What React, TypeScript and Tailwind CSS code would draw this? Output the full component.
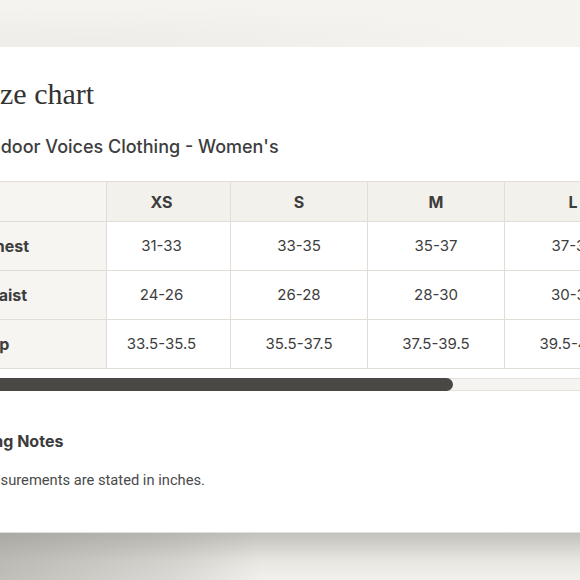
import React from 'react';

const sizes = ['XS', 'S', 'M', 'L'];

const rows = [
  { label: 'Chest', values: ['31-33', '33-35', '35-37', '37-39'] },
  { label: 'Waist', values: ['24-26', '26-28', '28-30', '30-32'] },
  { label: 'Hip', values: ['33.5-35.5', '35.5-37.5', '37.5-39.5', '39.5-41.5'] },
];

const sans = { fontFamily: 'Inter, "Noto Sans", sans-serif' };

const App: React.FC = () => {
  return (
    <div className="w-[580px] h-[580px] overflow-hidden flex flex-col bg-[#f4f3f0]" style={sans}>
      {/* blurred page behind the modal */}
      <div className="h-[47px] shrink-0 bg-[radial-gradient(ellipse_at_90px_40px,#efede9,#f4f3f0_60%)]"></div>

      <div className="h-[486px] shrink-0 bg-white border-b border-[#e2e0dc] overflow-hidden">
        <div className="-ml-[25px] w-[720px] pt-[29px] text-[#3b3b3b]">
          <h2 className="text-[30px] leading-[36px] text-[#333333]" style={{ fontFamily: '"Liberation Serif", "DejaVu Serif", serif' }}>
            Size chart
          </h2>

          <h3 className="mt-[23px] ml-[10px] text-[18px] leading-[24px] font-medium text-[#3d3d3d]">
            Indoor Voices Clothing - Women's
          </h3>

          <table className="mt-[22px] border-collapse text-[15px] text-[#3d3d3d]">
            <thead>
              <tr className="h-[40px] bg-[#f3f1ec]">
                <th className="w-[131px] border border-[#e2ded7] bg-[#f6f5f2]"></th>
                {sizes.map((s, i) => (
                  <th
                    key={s}
                    className={`border border-[#e2ded7] text-[16px] font-bold text-center ${i === 0 ? 'w-[124px] pr-[14px]' : 'w-[137px]'}`}
                  >
                    {s}
                  </th>
                ))}
              </tr>
            </thead>
            <tbody>
              {rows.map((r) => (
                <tr key={r.label} className="h-[49px]">
                  <td className="border border-[#e2ded7] bg-[#f6f5f2] pl-[7px] text-[16px] font-bold text-left">{r.label}</td>
                  {r.values.map((v, i) => (
                    <td key={v} className={`border border-[#e2ded7] text-center ${i === 0 ? 'pr-[14px]' : ''}`}>
                      {v}
                    </td>
                  ))}
                </tr>
              ))}
            </tbody>
          </table>

          {/* horizontal scrollbar */}
          <div className="mt-[9px] h-[13px] w-[720px] bg-[#f5f4f1] border-y border-[#e4e1dc] flex">
            <div className="w-[478px] h-[13px] -mt-px bg-[#4a4844] rounded-r-full"></div>
          </div>

          <h4 className="mt-[40px] -ml-[10px] text-[16px] leading-[20px] font-bold text-[#3b3b3b]">Sizing Notes</h4>
          <p className="mt-[17px] -ml-[3px] text-[14.7px] leading-[24px] text-[#4a4a4a]" style={{ fontFamily: 'Roboto, "Noto Sans", sans-serif' }}>
            Measurements are stated in inches.
          </p>
        </div>
      </div>

      <div className="flex-1 bg-[linear-gradient(to_right,rgba(150,148,142,0.55),rgba(150,148,142,0.25)_30%,rgba(150,148,142,0)_45%),linear-gradient(to_bottom,#c3c1bc,#e9e7e2_60%,#f2f0ec)]"></div>
    </div>
  );
};

export default App;
